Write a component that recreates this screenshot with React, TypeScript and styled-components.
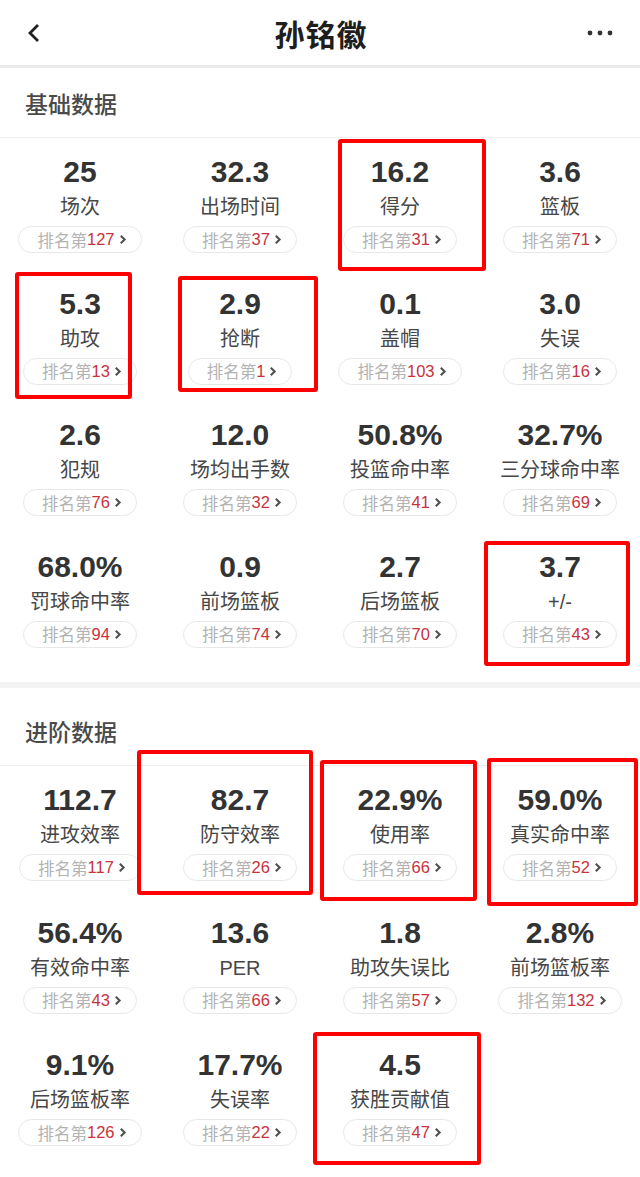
import * as React from 'react';
import styled, { createGlobalStyle } from 'styled-components';

const GlobalStyle = createGlobalStyle`
    html, body {
        margin: 0;
        padding: 0;
        background: #fff;
    }
    body {
        font-family: "Liberation Sans", "Noto Sans CJK SC", sans-serif;
        -webkit-font-smoothing: antialiased;
    }
`;

type Box = { top: number; left: number; width: number; height: number };

type Stat = {
    value: string;
    label: string;
    rank: number;
    box?: Box;
};

const basicStats: Stat[] = [
    { value: '25', label: '场次', rank: 127 },
    { value: '32.3', label: '出场时间', rank: 37 },
    { value: '16.2', label: '得分', rank: 31, box: { top: 1, left: 18, width: 148, height: 132 } },
    { value: '3.6', label: '篮板', rank: 71 },
    { value: '5.3', label: '助攻', rank: 13, box: { top: 2, left: 15, width: 117, height: 127 } },
    { value: '2.9', label: '抢断', rank: 1, box: { top: 6, left: 18, width: 140, height: 116 } },
    { value: '0.1', label: '盖帽', rank: 103 },
    { value: '3.0', label: '失误', rank: 16 },
    { value: '2.6', label: '犯规', rank: 76 },
    { value: '12.0', label: '场均出手数', rank: 32 },
    { value: '50.8%', label: '投篮命中率', rank: 41 },
    { value: '32.7%', label: '三分球命中率', rank: 69 },
    { value: '68.0%', label: '罚球命中率', rank: 94 },
    { value: '0.9', label: '前场篮板', rank: 74 },
    { value: '2.7', label: '后场篮板', rank: 70 },
    { value: '3.7', label: '+/-', rank: 43, box: { top: 8, left: 4, width: 146, height: 125 } },
];

const advancedStats: Stat[] = [
    { value: '112.7', label: '进攻效率', rank: 117 },
    { value: '82.7', label: '防守效率', rank: 26, box: { top: -16, left: -23, width: 176, height: 145 } },
    { value: '22.9%', label: '使用率', rank: 66, box: { top: -6, left: 0, width: 157, height: 141 } },
    { value: '59.0%', label: '真实命中率', rank: 52, box: { top: -8, left: 7, width: 151, height: 148 } },
    { value: '56.4%', label: '有效命中率', rank: 43 },
    { value: '13.6', label: 'PER', rank: 66 },
    { value: '1.8', label: '助攻失误比', rank: 57 },
    { value: '2.8%', label: '前场篮板率', rank: 132 },
    { value: '9.1%', label: '后场篮板率', rank: 126 },
    { value: '17.7%', label: '失误率', rank: 22 },
    { value: '4.5', label: '获胜贡献值', rank: 47, box: { top: 1, left: -7, width: 168, height: 133 } },
];

const Page = styled.div`
    width: 640px;
    min-height: 1177px;
    background: #fff;
    overflow: hidden;
`;

const TopBar = styled.header`
    height: 65px;
    display: grid;
    grid-template-columns: 1fr auto 1fr;
    align-items: center;
    padding: 0 20px 0 14px;
    border-bottom: 3px solid #ebebeb;
`;

const BarButton = styled.div<{ $end?: boolean }>`
    width: 40px;
    height: 40px;
    display: flex;
    align-items: center;
    justify-content: center;
    justify-self: ${(p) => (p.$end ? 'end' : 'start')};
`;

const Title = styled.h1`
    margin: 0 0 0 8px;
    font-family: "Noto Sans CJK SC", sans-serif;
    font-size: 30px;
    font-weight: 700;
    color: #1e1e1e;
    letter-spacing: 1px;
`;

const Section = styled.section<{ $bottom: number; $band: boolean }>`
    padding-bottom: ${(p) => p.$bottom}px;
    border-bottom: ${(p) => (p.$band ? '6px solid #f3f3f3' : 'none')};
`;

const SectionHead = styled.div<{ $top: number }>`
    height: 69px;
    margin-top: ${(p) => p.$top}px;
    display: flex;
    align-items: center;
    padding-left: 25px;
    border-bottom: 1px solid #efefef;
`;

const SectionTitle = styled.h2`
    margin: 0;
    font-family: "Noto Sans CJK SC", sans-serif;
    font-size: 23px;
    font-weight: 500;
    color: #4a4a4a;
`;

const Grid = styled.div<{ $row: number }>`
    display: grid;
    grid-template-columns: repeat(4, 160px);
    grid-auto-rows: ${(p) => p.$row}px;
`;

const Cell = styled.div`
    position: relative;
    display: flex;
    flex-direction: column;
    align-items: center;
    padding-top: 17px;
    box-sizing: border-box;
`;

const Value = styled.div`
    font-size: 30px;
    font-weight: 700;
    line-height: 34px;
    color: #333;
`;

const Label = styled.div`
    margin-top: 4px;
    font-size: 20px;
    line-height: 28px;
    color: #474747;
`;

const RankPill = styled.div`
    margin-top: 5px;
    height: 27px;
    box-sizing: border-box;
    display: flex;
    align-items: center;
    padding: 0 14px 0 18px;
    border: 1px solid #e8e8e8;
    border-radius: 14px;
    font-size: 16.5px;
    color: #b3b3b3;
    white-space: nowrap;
`;

const RankNum = styled.span`
    color: #c8323d;
`;

const Chevron = styled.svg`
    margin-left: 4px;
`;

const Highlight = styled.div<{ $box: Box }>`
    position: absolute;
    top: ${(p) => p.$box.top}px;
    left: ${(p) => p.$box.left}px;
    width: ${(p) => p.$box.width}px;
    height: ${(p) => p.$box.height}px;
    box-sizing: border-box;
    border: 4.5px solid #ff0000;
    border-radius: 3px;
    pointer-events: none;
`;

const StatCell: React.FC<{ stat: Stat }> = ({ stat }) => (
    <Cell>
        <Value>{stat.value}</Value>
        <Label>{stat.label}</Label>
        <RankPill>
            排名第<RankNum>{stat.rank}</RankNum>
            <Chevron width="8" height="11" viewBox="0 0 8 11">
                <polyline points="1.8,1.8 5.6,5.5 1.8,9.2" fill="none" stroke="#505050" strokeWidth="2.1" />
            </Chevron>
        </RankPill>
        {stat.box && <Highlight $box={stat.box} />}
    </Cell>
);

export default function App() {
    return (
        <Page>
            <GlobalStyle />
            <TopBar>
                <BarButton>
                    <svg width="16" height="22" viewBox="0 0 16 22">
                        <polyline points="12,3 4,11 12,19" fill="none" stroke="#222" strokeWidth="2.8" />
                    </svg>
                </BarButton>
                <Title>孙铭徽</Title>
                <BarButton $end>
                    <svg width="26" height="8" viewBox="0 0 26 8">
                        <circle cx="3" cy="4" r="2.4" fill="#333" />
                        <circle cx="13" cy="4" r="2.4" fill="#333" />
                        <circle cx="23" cy="4" r="2.4" fill="#333" />
                    </svg>
                </BarButton>
            </TopBar>

            <Section $bottom={18} $band>
                <SectionHead $top={0}>
                    <SectionTitle>基础数据</SectionTitle>
                </SectionHead>
                <Grid $row={131.5}>
                    {basicStats.map((s) => (
                        <StatCell key={s.label} stat={s} />
                    ))}
                </Grid>
            </Section>

            <Section $bottom={0} $band={false}>
                <SectionHead $top={8}>
                    <SectionTitle>进阶数据</SectionTitle>
                </SectionHead>
                <Grid $row={132.5}>
                    {advancedStats.map((s) => (
                        <StatCell key={s.label} stat={s} />
                    ))}
                </Grid>
            </Section>
        </Page>
    );
}
